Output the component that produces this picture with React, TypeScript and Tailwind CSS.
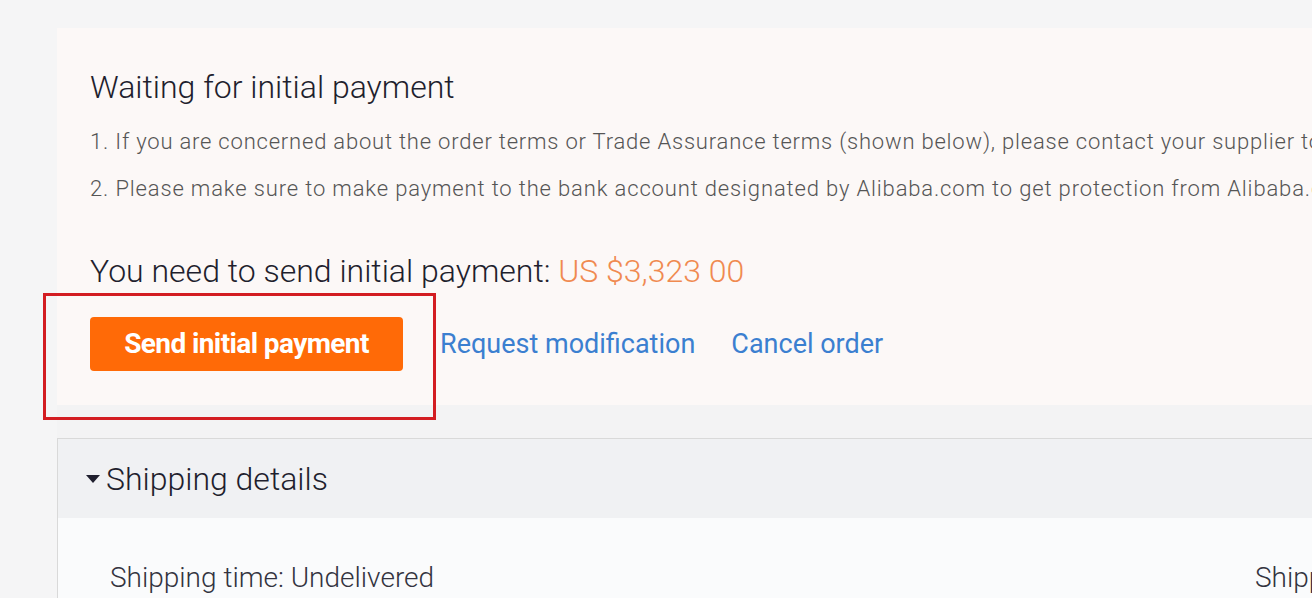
import React from "react";

export default function App() {
  return (
    <div
      className="relative w-[1312px] h-[598px] overflow-hidden bg-[#f5f5f6]"
      style={{ fontFamily: "Roboto, 'Liberation Sans', sans-serif" }}
    >
      <div className="pt-[28px] pl-[57px]">
        {/* pink panel */}
        <div className="bg-[#fcf8f7] h-[377px] pl-[33px] pt-[40px] overflow-hidden">
          <h1 className="text-[32px] leading-[38px] font-light text-[#1f1f2e] whitespace-nowrap">
            Waiting for initial payment
          </h1>
          <p className="mt-[24px] text-[22px] leading-[24px] font-light tracking-[0.8px] text-[#555555] whitespace-nowrap">
            1. If you are concerned about the order terms or Trade Assurance terms (shown below), please contact your supplier to request modification.
          </p>
          <p className="mt-[23px] text-[22px] leading-[24px] font-light tracking-[0.85px] text-[#555555] whitespace-nowrap">
            2. Please make sure to make payment to the bank account designated by Alibaba.com to get protection from Alibaba.com Trade Assurance.
          </p>
          <p className="mt-[51px] text-[32px] leading-[38px] font-light text-[#1f1f2e] whitespace-nowrap">
            You need to send initial payment: <span className="text-[#f08a50]">US $3,323 00</span>
          </p>
          <div className="mt-[27px] flex items-center">
            <button className="w-[313px] h-[54px] rounded-[4px] bg-[#ff6a07] text-white text-[28px] font-bold tracking-[-0.6px] leading-none">
              Send initial payment
            </button>
            <a className="ml-[37px] text-[27px] text-[#3b7fd0] whitespace-nowrap">Request modification</a>
            <a className="ml-[36px] text-[27px] text-[#3b7fd0] whitespace-nowrap">Cancel order</a>
          </div>
        </div>
        {/* gap strip */}
        <div className="h-[33px] bg-[#f3f3f4]" />
        {/* shipping box */}
        <div className="border-l border-t border-[#d9d9d9] bg-[#fafbfc] h-[200px] overflow-hidden">
          <div className="h-[79px] bg-[#f0f1f3] flex items-center pl-[28px]">
            <svg width="14" height="8" viewBox="0 0 14 8" className="mr-[6px]">
              <path d="M0 0 L14 0 L7 8 Z" fill="#1f1f2e" />
            </svg>
            <span className="text-[32px] font-light text-[#1f1f2e]">Shipping details</span>
          </div>
          <div className="flex pl-[52px] pt-[44px]">
            <span className="w-[1145px] shrink-0 text-[28px] leading-[32px] font-light text-[#333340] whitespace-nowrap">
              Shipping time: Undelivered
            </span>
            <span className="shrink-0 text-[28px] leading-[32px] font-light text-[#333340] whitespace-nowrap">
              Shipping
            </span>
          </div>
        </div>
      </div>
      {/* red annotation rectangle */}
      <div className="absolute left-[43px] top-[293px] w-[393px] h-[127px] border-[3px] border-[#d31d22]" />
    </div>
  );
}
